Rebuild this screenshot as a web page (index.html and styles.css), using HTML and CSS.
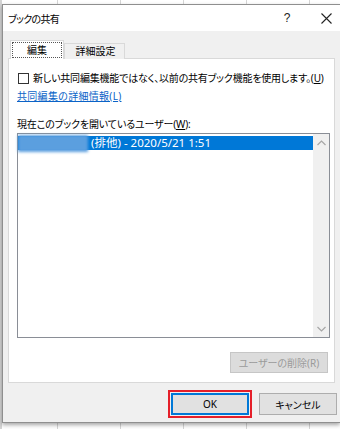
FILE: index.html
```html
<!DOCTYPE html>
<html lang="ja">
<head>
<meta charset="utf-8">
<title>ブックの共有</title>
<link rel="stylesheet" href="styles.css">
</head>
<body>
<div class="sheet">
  <div class="dialog">
    <div class="titlebar">
      <span class="title">ブックの共有</span>
      <span class="help">?</span>
      <span class="close">
        <svg width="11" height="11" viewBox="0 0 11 11"><path d="M0.5 0.5L10.5 10.5M10.5 0.5L0.5 10.5" stroke="#222" stroke-width="1.1" fill="none"/></svg>
      </span>
    </div>
    <div class="body">
      <div class="tabs">
        <div class="tab active"><span class="focus">編集</span></div>
        <div class="tab">詳細設定</div>
      </div>
      <div class="panel">
        <div class="check"><span class="box"></span><span class="check-text">新しい共同編集機能ではなく、以前の共有ブック機能を使用します。(<u>U</u>)</span></div>
        <div class="link">共同編集の詳細情報(L)</div>
        <div class="label">現在このブックを開いているユーザー(<u>W</u>):</div>
        <div class="list">
          <div class="items">
            <div class="row selected"><span class="blur"></span><span class="entry">(排他) - 2020/5/21 1:51</span></div>
          </div>
          <div class="scroll">
            <span class="arrow">
              <svg width="9" height="6" viewBox="0 0 9 6"><path d="M0.5 5L4.5 1L8.5 5" stroke="#a6a6a6" stroke-width="1.2" fill="none"/></svg>
            </span>
            <span class="arrow">
              <svg width="9" height="6" viewBox="0 0 9 6"><path d="M0.5 1L4.5 5L8.5 1" stroke="#a6a6a6" stroke-width="1.2" fill="none"/></svg>
            </span>
          </div>
        </div>
        <div class="actions"><button class="btn disabled" disabled>ユーザーの削除(R)</button></div>
      </div>
      <div class="footer">
        <span class="annot"><button class="btn ok">OK</button></span>
        <button class="btn">キャンセル</button>
      </div>
    </div>
  </div>
</div>
</body>
</html>
```

FILE: styles.css
```css
* { box-sizing: border-box; }
html, body {
  margin: 0;
  padding: 0;
  width: 340px;
  height: 429px;
  overflow: hidden;
}
body {
  font-family: "Noto Sans", "Noto Sans CJK JP", sans-serif;
  font-size: 10px;
  font-feature-settings: "palt";
  color: #000;
  background-color: #fff;
  background-image:
    linear-gradient(to right, #d4d4d4 0 2px, transparent 2px),
    repeating-linear-gradient(to right, transparent 0 62px, #d6d6d6 62px 63px);
  background-position: 0 0, -5px 0;
}
.sheet {
  width: 340px;
  height: 429px;
  padding: 4px 0 0 2px;
}
.dialog {
  width: 338px;
  height: 419px;
  border: 1px solid #8f8f8f;
  border-right: none;
  box-shadow: 0 2px 4px rgba(0,0,0,0.35);
  display: flex;
  flex-direction: column;
  background: #f0f0f0;
}
.titlebar {
  height: 26px;
  flex: none;
  background: #fff;
  display: flex;
  align-items: center;
  padding-left: 5px;
}
.title {
  flex: 1;
  letter-spacing: -0.7px;
}
.help {
  width: 14px;
  text-align: center;
  font-family: "Liberation Sans", sans-serif;
  font-size: 12px;
  margin-right: 18px;
  color: #222;
}
.close {
  width: 28px;
  display: flex;
  justify-content: center;
  align-items: center;
}
.body {
  flex: 1;
  padding: 9px 3px 0 5px;
  display: flex;
  flex-direction: column;
}
.tabs {
  display: flex;
  align-items: flex-end;
  padding-left: 2px;
  position: relative;
  z-index: 1;
  margin-bottom: -1px;
}
.tab {
  border: 1px solid #d9d9d9;
  border-bottom: none;
  background: #f0f0f0;
  height: 16px;
  width: 61px;
  text-align: center;
  line-height: 15px;
  padding-left: 2px;
}
.tab.active {
  background: #fff;
  height: 19px;
  width: 54px;
  padding: 1px;
}
.focus {
  display: block;
  height: 16px;
  border: 1px dotted #555;
  line-height: 14px;
  text-align: center;
}
.panel {
  width: 327px;
  height: 325px;
  background: #fff;
  border: 1px solid #d9d9d9;
  padding: 12px 4px 0 8px;
  display: flex;
  flex-direction: column;
}
.check {
  display: flex;
  align-items: center;
  line-height: 15px;
  height: 15px;
  white-space: nowrap;
}
.check-text { letter-spacing: -0.2px; }
.box {
  width: 11px;
  height: 11px;
  border: 1px solid #333;
  margin: 0 4px 0 1px;
  flex: none;
}
.link {
  margin-top: 3px;
  line-height: 15px;
  color: #0b63c7;
  text-decoration: underline;
  letter-spacing: 0.3px;
}
.label {
  margin-top: 13px;
  line-height: 15px;
  letter-spacing: -0.15px;
}
.list {
  margin-top: 1px;
  height: 205px;
  border: 1px solid #8a8e96;
  display: flex;
}
.items {
  flex: 1;
  padding-top: 2px;
}
.row {
  height: 14px;
  line-height: 14px;
  display: flex;
  align-items: center;
}
.row.selected {
  background: #0078d7;
  color: #fff;
}
.entry {
  font-size: 11.5px;
}
.blur {
  width: 70px;
  height: 17px;
  margin-right: 3px;
  background: #5b9fdf;
  filter: blur(1.5px);
}
.scroll {
  width: 16px;
  background: #f0f0f0;
  display: flex;
  flex-direction: column;
  justify-content: space-between;
  align-items: center;
  padding: 6px 0 5px;
}
.arrow { display: flex; }
.actions {
  margin-top: 14px;
  display: flex;
  justify-content: flex-end;
  padding-right: 2px;
}
.btn {
  font: inherit;
  font-feature-settings: "palt";
  height: 22px;
  width: 78px;
  border: 1px solid #adadad;
  background: #e1e1e1;
  color: #000;
  padding: 0;
}
.btn.disabled {
  width: 98px;
  height: 21px;
  background: #dcdcdc;
  border-color: #c6c6c6;
  color: #9a9a9a;
}
.footer {
  margin-top: 7px;
  display: flex;
  justify-content: flex-end;
  align-items: center;
  gap: 7px;
}
.annot {
  display: flex;
  border: 2px solid #e5202a;
  padding: 1px;
}
.btn.ok {
  border: 2px solid #0078d7;
}
```
